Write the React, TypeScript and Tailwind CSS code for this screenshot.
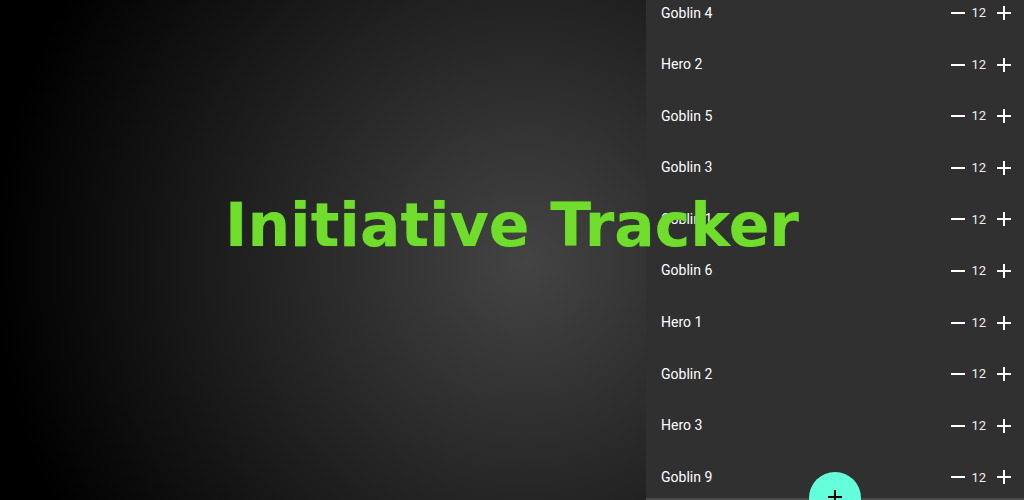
import React from "react";

const rows = [
  "Goblin 4",
  "Hero 2",
  "Goblin 5",
  "Goblin 3",
  "Goblin 1",
  "Goblin 6",
  "Hero 1",
  "Goblin 2",
  "Hero 3",
  "Goblin 9",
];

function Minus() {
  return (
    <svg width="14" height="14" viewBox="0 0 14 14" className="block">
      <path d="M0 7h14" stroke="#fff" strokeWidth="2" />
    </svg>
  );
}

function Plus({ color = "#fff" }: { color?: string }) {
  return (
    <svg width="14" height="14" viewBox="0 0 14 14" className="block">
      <path d="M0 7h14M7 0v14" stroke={color} strokeWidth="2" />
    </svg>
  );
}

export default function App() {
  return (
    <div className="relative w-[1024px] h-[500px] overflow-hidden flex bg-black font-['Roboto',sans-serif]">
      <div className="flex-1 bg-[radial-gradient(circle_at_525px_262px,#444444_0px,#000000_530px)]" />
      <div className="relative w-[378px] h-full bg-[#303030] flex flex-col">
        <div className="flex-1 overflow-hidden">
          <div className="-mt-[12.8px] flex flex-col">
            {rows.map((r) => (
              <div key={r} className="h-[51.6px] shrink-0 flex items-center pl-[15px] pr-[13px]">
                <span className="flex-1 text-[14px] text-white">{r}</span>
                <Minus />
                <span className="ml-[6px] mr-[11px] text-[13px] text-[#eeeeee]">12</span>
                <Plus />
              </div>
            ))}
          </div>
        </div>
        <div className="h-[2px] bg-[#4a4a4a]" />
        <div className="absolute left-[163px] top-[472px] w-[52px] h-[52px] rounded-full bg-[#64ffda] flex justify-center pt-[18px]">
          <Plus color="#000" />
        </div>
      </div>
      <div className="absolute inset-x-0 top-[185px] flex justify-center pointer-events-none">
        <h1 className="font-['DejaVu_Sans',sans-serif] font-bold text-[60px] leading-[80px] text-[#70dc2c] [text-shadow:0_0_1px_#3a7a18]">
          Initiative Tracker
        </h1>
      </div>
    </div>
  );
}
